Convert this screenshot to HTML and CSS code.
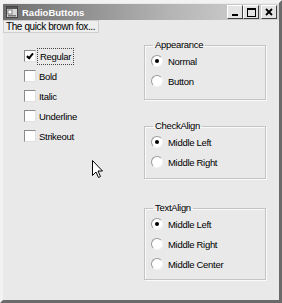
FILE: index.html
```html
<!DOCTYPE html>
<html lang="en">
<head>
  <meta charset="UTF-8" />
  <title>RadioButtons</title>
  <link rel="stylesheet" href="styles.css">
</head>
<body>
  <div class="window">
    <!-- TITLE BAR -->
    <div class="titlebar">
      <div class="app-icon">
        <svg width="12" height="12" viewBox="0 0 12 12">
          <rect x="0.5" y="0.5" width="11" height="11" fill="#d8d8d8" stroke="#444"/>
          <rect x="1" y="1" width="10" height="2" fill="#555"/>
          <rect x="2" y="4" width="4" height="4" fill="#fff" stroke="#666" stroke-width="0.8"/>
          <rect x="2" y="9" width="8" height="1.5" fill="#777"/>
        </svg>
      </div>
      <span class="title">RadioButtons</span>
      <div class="caption-buttons">
        <span class="cap-btn">
          <svg width="8" height="8" viewBox="0 0 8 8"><rect x="1" y="6" width="6" height="2" fill="#000"/></svg>
        </span>
        <span class="cap-btn">
          <svg width="9" height="9" viewBox="0 0 9 9"><rect x="0.5" y="0.5" width="8" height="8" fill="none" stroke="#000"/><rect x="0" y="0" width="9" height="2" fill="#000"/></svg>
        </span>
        <span class="cap-btn close">
          <svg width="8" height="8" viewBox="0 0 8 8"><path d="M1 1 L7 7 M7 1 L1 7" stroke="#000" stroke-width="1.8"/></svg>
        </span>
      </div>
    </div>

    <!-- CLIENT AREA -->
    <div class="client">
      <div class="sample">The quick brown fox...</div>

      <div class="columns">
        <div class="checks">
          <div class="row"><span class="check on"></span><span class="focus">Regular</span></div>
          <div class="row"><span class="check"></span><span>Bold</span></div>
          <div class="row"><span class="check"></span><span>Italic</span></div>
          <div class="row"><span class="check"></span><span>Underline</span></div>
          <div class="row"><span class="check"></span><span>Strikeout</span></div>
        </div>

        <div class="groups">
          <fieldset class="group g-appearance">
            <legend>Appearance</legend>
            <div class="row"><span class="radio on"></span><span>Normal</span></div>
            <div class="row"><span class="radio"></span><span>Button</span></div>
          </fieldset>
          <fieldset class="group g-checkalign">
            <legend>CheckAlign</legend>
            <div class="row"><span class="radio on"></span><span>Middle Left</span></div>
            <div class="row"><span class="radio"></span><span>Middle Right</span></div>
          </fieldset>
          <fieldset class="group g-textalign">
            <legend>TextAlign</legend>
            <div class="row"><span class="radio on"></span><span>Middle Left</span></div>
            <div class="row"><span class="radio"></span><span>Middle Right</span></div>
            <div class="row"><span class="radio"></span><span>Middle Center</span></div>
          </fieldset>
        </div>
      </div>

      <!-- mouse pointer -->
      <svg class="cursor" width="12" height="19" viewBox="0 0 12 19">
        <path d="M0.5 0.5 L0.5 15.5 L4 12 L6.5 17.5 L8.5 16.5 L6 11 L10.5 11 Z" fill="#fff" stroke="#000" stroke-width="1"/>
      </svg>
    </div>
  </div>
</body>
</html>
```

FILE: styles.css
```css
body {
  margin: 0;
  font-family: 'Liberation Sans', Arial, sans-serif;
  font-size: 9.5px;
  letter-spacing: -0.3px;
  color: #000;
  background: #e9e9e9;
}

.window {
  width: 282px;
  height: 303px;
  box-sizing: border-box;
  background: #e9e9e9;
  border-top: 3px solid #f2f2f2;
  border-left: 3px solid #f2f2f2;
  border-right: 3px solid #6a6a6a;
  border-bottom: 3px solid #6a6a6a;
  display: flex;
  flex-direction: column;
}

.titlebar {
  height: 16px;
  margin: 1px 0 0 0;
  background: linear-gradient(to right, #6e6e6e, #b4b4b4 60%, #d6d6d6);
  display: flex;
  align-items: center;
  padding: 0 2px 0 3px;
}

.app-icon {
  display: flex;
  margin-right: 4px;
}

.title {
  color: #fff;
  font-weight: bold;
  font-size: 9.5px;
  letter-spacing: 0;
  flex: 1;
}

.caption-buttons {
  display: flex;
}

.cap-btn {
  width: 14px;
  height: 12px;
  background: #e4e4e4;
  border-top: 1px solid #fff;
  border-left: 1px solid #fff;
  border-right: 1px solid #404040;
  border-bottom: 1px solid #404040;
  display: flex;
  align-items: center;
  justify-content: center;
}

.cap-btn.close {
  margin-left: 2px;
}

.client {
  flex: 1;
  position: relative;
}

.sample {
  width: 92px;
  height: 11px;
  line-height: 11px;
  padding-left: 2px;
  border: 1px solid #cfcfcf;
  background: #eeeeee;
  white-space: nowrap;
  font-size: 10px;
  letter-spacing: -0.4px;
}

.columns {
  display: flex;
  padding-top: 6px;
}

.checks {
  width: 120px;
  padding-left: 21px;
  padding-top: 7px;
}

.row {
  display: flex;
  align-items: center;
  height: 20px;
  gap: 3px;
}

.check {
  width: 10px;
  height: 10px;
  background: #fff;
  border: 1px solid #8a8a8a;
  border-right-color: #e0e0e0;
  border-bottom-color: #e0e0e0;
  position: relative;
}

.check.on::after {
  content: "";
  position: absolute;
  left: 3px;
  top: 1px;
  width: 2px;
  height: 5px;
  border-right: 2px solid #000;
  border-bottom: 2px solid #000;
  transform: rotate(40deg);
}

.focus {
  outline: 1px dotted #444;
  padding: 2px 2px;
  margin-left: -1px;
}

.groups {
  display: flex;
  flex-direction: column;
}

.group {
  width: 122px;
  margin: 0;
  padding: 0 0 0 6px;
  border: 1px solid #c4c4c4;
  box-shadow: 1px 1px 0 #fafafa, inset 1px 1px 0 #fafafa;
  box-sizing: border-box;
}

.group legend {
  padding: 0 2px;
  margin-left: 2px;
  line-height: 12px;
}

.g-appearance { height: 61px; }
.g-checkalign { height: 59px; margin-top: 20px; }
.g-textalign { height: 78px; margin-top: 23px; }

.radio {
  width: 10px;
  height: 10px;
  border-radius: 50%;
  background: #fff;
  border: 1px solid #9a9a9a;
  border-right-color: #f4f4f4;
  border-bottom-color: #f4f4f4;
  position: relative;
  margin-right: 2px;
}

.radio.on::after {
  content: "";
  position: absolute;
  left: 3px;
  top: 3px;
  width: 4px;
  height: 4px;
  border-radius: 50%;
  background: #000;
}

.cursor {
  position: absolute;
  left: 89px;
  top: 140px;
}
```
